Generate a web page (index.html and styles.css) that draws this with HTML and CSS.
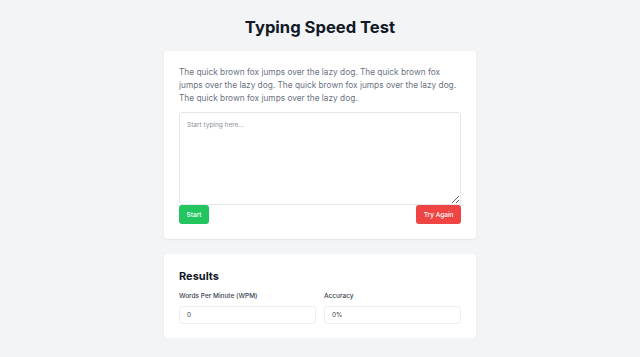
FILE: index.html
```html
<!DOCTYPE html>
<html lang="en">
<head>
<meta charset="utf-8">
<title>Typing Speed Test</title>
<link rel="stylesheet" href="styles.css">
</head>
<body>
<main class="page">
  <h1 class="title">Typing Speed Test</h1>
  <section class="card">
    <p class="sample">The quick brown fox jumps over the lazy dog. The quick brown fox jumps over the lazy dog. The quick brown fox jumps over the lazy dog. The quick brown fox jumps over the lazy dog.</p>
    <textarea class="input-area" placeholder="Start typing here..."></textarea>
    <div class="actions">
      <button class="btn btn-start">Start</button>
      <button class="btn btn-reset">Try Again</button>
    </div>
  </section>
  <section class="card card-results">
    <h2 class="results-title">Results</h2>
    <div class="stats">
      <div class="stat">
        <label class="stat-label">Words Per Minute (WPM)</label>
        <div class="stat-value">0</div>
      </div>
      <div class="stat">
        <label class="stat-label">Accuracy</label>
        <div class="stat-value">0%</div>
      </div>
    </div>
  </section>
</main>
</body>
</html>
```
FILE: styles.css
```css
* { box-sizing: border-box; }
html, body { margin: 0; padding: 0; }
body {
  background: #f3f4f6;
  font-family: Inter, "Noto Sans", sans-serif;
  color: #111827;
}
.page {
  width: 312px;
  margin: 0 auto;
  padding-top: 16px;
  display: flex;
  flex-direction: column;
  gap: 15px;
}
.title {
  margin: 0;
  text-align: center;
  font-size: 16.6px;
  line-height: 22px;
  font-weight: 700;
  height: 20px;
}
.card {
  background: #fff;
  border-radius: 3px;
  box-shadow: 0 1px 2px rgba(0,0,0,0.06), 0 0 1px rgba(0,0,0,0.05);
  padding: 15px;
}
.card-results { padding-bottom: 14px; }
.sample {
  margin: 0;
  font-size: 8.3px;
  line-height: 13px;
  color: #6b7280;
}
.input-area {
  display: block;
  width: 100%;
  height: 93px;
  margin-top: 7px;
  border: 1px solid #e5e7eb;
  border-radius: 3px;
  padding: 8px 7px;
  font-family: inherit;
  font-size: 6.5px;
  resize: vertical;
  outline: none;
}
.input-area::placeholder { color: #8b8f96; }
.actions {
  display: flex;
  justify-content: space-between;
}
.btn {
  border: none;
  border-radius: 3px;
  color: #fff;
  font-family: inherit;
  font-size: 6.5px;
  font-weight: 500;
  height: 19px;
  padding: 0 7.5px;
}
.btn-start { background: #22c55e; }
.btn-reset { background: #ef4444; }
.results-title {
  margin: 0;
  font-size: 11px;
  line-height: 14px;
  font-weight: 700;
}
.stats {
  margin-top: 8px;
  display: grid;
  grid-template-columns: 1fr 1fr;
  gap: 8px;
}
.stat { display: flex; flex-direction: column; }
.stat-label {
  font-size: 6.5px;
  line-height: 10px;
  font-weight: 500;
  color: #374151;
}
.stat-value {
  margin-top: 5px;
  height: 18px;
  border: 1px solid #eceef1;
  border-radius: 3px;
  padding: 0 7px;
  font-size: 6.5px;
  line-height: 16px;
  color: #374151;
}
```
